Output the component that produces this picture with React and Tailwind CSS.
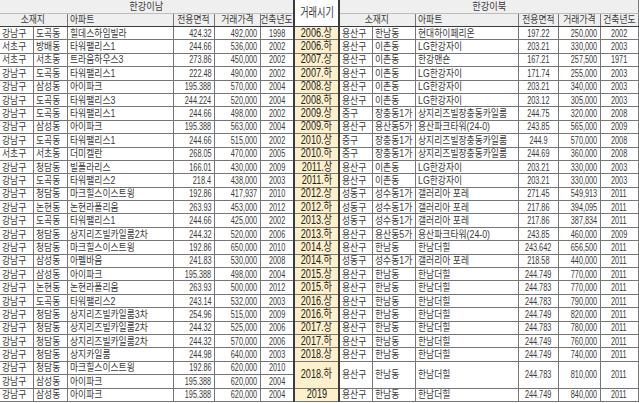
import React from "react";

const rows = [
  { l: ["강남구", "도곡동", "힐데스하임빌라", "424.32", "492,000", "1998"], p: "2006.상", r: ["용산구", "한남동", "현대하이페리온", "197.22", "250,000", "2002"] },
  { l: ["서초구", "방배동", "타워팰리스1", "244.66", "536,000", "2002"], p: "2006.하", r: ["용산구", "이촌동", "LG한강자이", "203.21", "330,000", "2003"] },
  { l: ["서초구", "서초동", "트라움하우스3", "273.86", "450,000", "2002"], p: "2007.상", r: ["용산구", "이촌동", "한강맨숀", "167.21", "257,500", "1971"] },
  { l: ["강남구", "도곡동", "타워팰리스1", "222.48", "490,000", "2002"], p: "2007.하", r: ["용산구", "이촌동", "LG한강자이", "171.74", "255,000", "2003"] },
  { l: ["강남구", "삼성동", "아이파크", "195.388", "570,000", "2004"], p: "2008.상", r: ["용산구", "이촌동", "LG한강자이", "203.21", "340,000", "2003"] },
  { l: ["강남구", "도곡동", "타워팰리스3", "244.224", "520,000", "2004"], p: "2008.하", r: ["용산구", "이촌동", "LG한강자이", "203.12", "305,000", "2003"] },
  { l: ["강남구", "도곡동", "타워팰리스1", "244.66", "498,000", "2002"], p: "2009.상", r: ["중구", "장충동1가", "상지리즈빌장충동카일룸", "244.75", "320,000", "2008"] },
  { l: ["강남구", "삼성동", "아이파크", "195.388", "563,000", "2004"], p: "2009.하", r: ["용산구", "용산동5가", "용산파크타워(24-0)", "243.85", "565,000", "2009"] },
  { l: ["강남구", "도곡동", "타워팰리스1", "244.66", "515,000", "2002"], p: "2010.상", r: ["중구", "장충동1가", "상지리즈빌장충동카일룸", "244.9", "570,000", "2008"] },
  { l: ["서초구", "서초동", "더미켈란", "268.05", "470,000", "2005"], p: "2010.하", r: ["중구", "장충동1가", "상지리즈빌장충동카일룸", "244.69", "360,000", "2008"] },
  { l: ["강남구", "청담동", "빌폴라리스", "166.01", "430,000", "2009"], p: "2011.상", r: ["용산구", "이촌동", "LG한강자이", "203.21", "330,000", "2003"] },
  { l: ["강남구", "도곡동", "타워팰리스2", "218.4", "438,000", "2003"], p: "2011.하", r: ["용산구", "이촌동", "LG한강자이", "203.21", "330,000", "2003"] },
  { l: ["강남구", "청담동", "마크힐스이스트윙", "192.86", "417,937", "2010"], p: "2012.상", r: ["성동구", "성수동1가", "갤러리아 포레", "271.45", "549,913", "2011"] },
  { l: ["강남구", "논현동", "논현라폴리움", "263.93", "453,000", "2012"], p: "2012.하", r: ["성동구", "성수동1가", "갤러리아 포레", "217.86", "394,095", "2011"] },
  { l: ["강남구", "도곡동", "타워팰리스1", "244.66", "425,000", "2002"], p: "2013.상", r: ["성동구", "성수동1가", "갤러리아 포레", "217.86", "387,834", "2011"] },
  { l: ["강남구", "청담동", "상지리즈빌카일룸2차", "244.32", "520,000", "2006"], p: "2013.하", r: ["용산구", "용산동5가", "용산파크타워(24-0)", "243.85", "460,000", "2009"] },
  { l: ["강남구", "청담동", "마크힐스이스트윙", "192.86", "650,000", "2010"], p: "2014.상", r: ["용산구", "한남동", "한남더힐", "243.642", "656,500", "2011"] },
  { l: ["강남구", "삼성동", "아펠바움", "241.83", "530,000", "2008"], p: "2014.하", r: ["성동구", "성수동1가", "갤러리아 포레", "218.58", "440,000", "2011"] },
  { l: ["강남구", "삼성동", "아이파크", "195.388", "498,000", "2004"], p: "2015.상", r: ["용산구", "한남동", "한남더힐", "244.749", "770,000", "2011"] },
  { l: ["강남구", "논현동", "논현라폴리움", "263.93", "500,000", "2012"], p: "2015.하", r: ["용산구", "한남동", "한남더힐", "244.783", "770,000", "2011"] },
  { l: ["강남구", "도곡동", "타워팰리스2", "243.14", "532,000", "2003"], p: "2016.상", r: ["용산구", "한남동", "한남더힐", "244.783", "790,000", "2011"] },
  { l: ["강남구", "청담동", "상지리즈빌카일룸3차", "254.96", "515,000", "2009"], p: "2016.하", r: ["용산구", "한남동", "한남더힐", "244.749", "820,000", "2011"] },
  { l: ["강남구", "청담동", "상지리즈빌카일룸2차", "244.32", "525,000", "2006"], p: "2017.상", r: ["용산구", "한남동", "한남더힐", "244.783", "780,000", "2011"] },
  { l: ["강남구", "청담동", "상지리즈빌카일룸2차", "244.32", "570,000", "2006"], p: "2017.하", r: ["용산구", "한남동", "한남더힐", "244.749", "760,000", "2011"] },
  { l: ["강남구", "청담동", "상지카일룸", "244.98", "640,000", "2003"], p: "2018.상", r: ["용산구", "한남동", "한남더힐", "244.749", "740,000", "2011"] },
  { l: ["강남구", "청담동", "마크힐스이스트윙", "192.86", "620,000", "2010"], p: "2018.하", span: 2, r: ["용산구", "한남동", "한남더힐", "244.783", "810,000", "2011"] },
  { l: ["강남구", "삼성동", "아이파크", "195.388", "620,000", "2004"], p: null, r: null },
  { l: ["강남구", "삼성동", "아이파크", "195.388", "620,000", "2004"], p: "2019", r: ["용산구", "한남동", "한남더힐", "244.749", "840,000", "2011"] },
];

const JUST = { l: "justify-start", c: "justify-center", r: "justify-end" };
const ORIG = { l: "origin-left", c: "origin-center", r: "origin-right" };

function C({ a = "l", k = false, size = "text-[10px]", className = "", children, rowSpan, colSpan }) {
  const sc = k ? "scale-x-[0.88]" : "scale-x-[0.73]";
  return (
    <td
      rowSpan={rowSpan}
      colSpan={colSpan}
      className={`border border-[#767676] p-0 px-[2px] align-middle overflow-hidden ${className}`}
    >
      <div className={`flex ${JUST[a]}`}>
        <span className={`inline-block whitespace-nowrap leading-[11px] ${sc} ${ORIG[a]} ${size}`}>
          {children}
        </span>
      </div>
    </td>
  );
}

const widths = [
  "w-[33px]", "w-[34px]", "w-[106px]", "w-[41px]", "w-[46px]", "w-[34px]",
  "w-[45px]",
  "w-[33px]", "w-[43px]", "w-[103px]", "w-[40px]", "w-[42px]", "w-[38px]",
];

export default function App() {
  const period = "bg-[#fdf0cb] border-x-2 border-x-[#3c3c3c] text-[#222]";
  const hd = "bg-[#efefef] text-[#3a3a3a] border-b-[#3c3c3c]";
  return (
    <div className="w-[639px] h-[403px] overflow-hidden bg-white">
      <table className="table-fixed border-collapse w-[638px] text-[#3a3a3a] font-['Liberation_Sans','Noto_Sans_CJK_KR',sans-serif]">
        <colgroup>
          {widths.map((w, i) => (
            <col key={i} className={w} />
          ))}
        </colgroup>
        <thead>
          <tr className="h-[13px]">
            <C a="c" k colSpan={6} size="text-[10.5px]" className="bg-[#efefef] text-[#3a3a3a] border-l-0 border-t-0 border-b-[#bdbdbd]">한강이남</C>
            <C a="c" rowSpan={2} size="text-[12.5px]" className="bg-white border-x-2 border-x-[#3c3c3c] border-t-0 border-b-[#3c3c3c] text-[#333]">거래시기</C>
            <C a="c" k colSpan={6} size="text-[10.5px]" className="bg-[#efefef] text-[#3a3a3a] border-t-0 border-b-[#bdbdbd]">한강이북</C>
          </tr>
          <tr className="h-[13.5px]">
            <C a="c" k colSpan={2} className={`${hd} border-l-0`}>소재지</C>
            <C a="l" k className={hd}>아파트</C>
            <C a="c" k className={hd}>전용면적</C>
            <C a="c" k className={hd}>거래가격</C>
            <C a="c" k className={hd}>건축년도</C>
            <C a="c" k colSpan={2} className={hd}>소재지</C>
            <C a="l" k className={hd}>아파트</C>
            <C a="c" k className={hd}>전용면적</C>
            <C a="c" k className={hd}>거래가격</C>
            <C a="c" k className={hd}>건축년도</C>
          </tr>
        </thead>
        <tbody>
          {rows.map((row, i) => (
            <tr key={i} className="h-[13.4px]">
              <C a="l" k className="border-l-0">{row.l[0]}</C>
              <C a="l" k>{row.l[1]}</C>
              <C a="l" k>{row.l[2]}</C>
              <C a="r">{row.l[3]}</C>
              <C a="r">{row.l[4]}</C>
              <C a="c">{row.l[5]}</C>
              {row.p && (
                <C a="c" rowSpan={row.span} size="text-[12.5px]" className={period}>{row.p}</C>
              )}
              {row.r && (
                <>
                  <C a="l" k rowSpan={row.span}>{row.r[0]}</C>
                  <C a="l" k rowSpan={row.span}>{row.r[1]}</C>
                  <C a="l" k rowSpan={row.span}>{row.r[2]}</C>
                  <C a="c" rowSpan={row.span}>{row.r[3]}</C>
                  <C a="r" rowSpan={row.span}>{row.r[4]}</C>
                  <C a="c" rowSpan={row.span}>{row.r[5]}</C>
                </>
              )}
            </tr>
          ))}
        </tbody>
      </table>
    </div>
  );
}
